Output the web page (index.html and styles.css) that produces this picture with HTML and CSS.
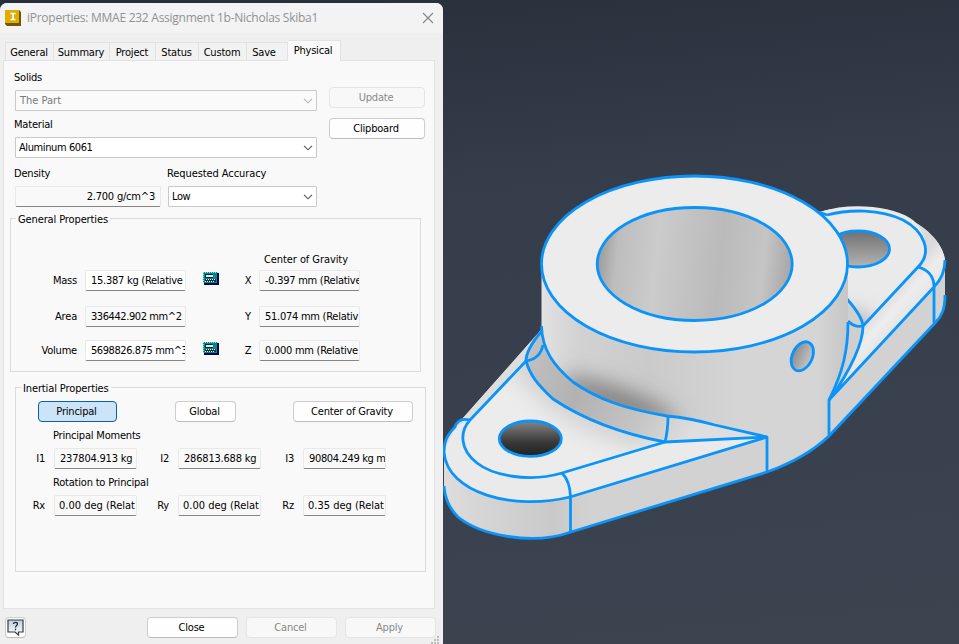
FILE: index.html
```html
<!DOCTYPE html>
<html lang="en">
<head>
<meta charset="utf-8">
<title>iProperties</title>
<link rel="stylesheet" href="styles.css">
</head>
<body>
<main class="workspace">
  <section class="dialog">
    <header class="titlebar">
      <svg class="app-icon" width="16" height="16" viewBox="0 0 16 16"><path d="M0 0h14l2 2v14H2L0 14z" fill="#735600"/><path d="M0 0h14v13H0z" fill="#dfae00"/><path d="M5.500 3.500h5M5.500 9.500h5M8 3.500v6" stroke="#fff" stroke-width="1.700"/></svg>
      <h1 class="title">iProperties: MMAE 232 Assignment 1b-Nicholas Skiba1</h1>
      <svg class="close-icon" width="12" height="12" viewBox="0 0 12 12"><path d="M1 1l10 10M11 1L1 11" stroke="#858585" stroke-width="1.100"/></svg>
    </header>
    <nav class="tabs">
      <span class="tab general">General</span><span class="tab summary">Summary</span><span class="tab project">Project</span><span class="tab status">Status</span><span class="tab custom">Custom</span><span class="tab save">Save</span><span class="tab active">Physical</span>
    </nav>
    <div class="panel">
      <div class="top">
        <div class="inputs">
          <label class="label">Solids</label>
          <div class="select disabled"><span>The Part</span><svg class="chev" width="10" height="6" viewBox="0 0 10 6"><path d="M1 .8l4 4 4-4"/></svg></div>
          <label class="label material">Material</label>
          <div class="select"><span>Aluminum 6061</span><svg class="chev" width="10" height="6" viewBox="0 0 10 6"><path d="M1 .8l4 4 4-4"/></svg></div>
          <div class="pair">
            <div class="density"><label class="label">Density</label><div class="field right">2.700 g/cm^3</div></div>
            <div class="accuracy"><label class="label wide">Requested Accuracy</label><div class="select"><span>Low</span><svg class="chev" width="10" height="6" viewBox="0 0 10 6"><path d="M1 .8l4 4 4-4"/></svg></div></div>
          </div>
        </div>
        <div class="actions"><button class="btn" disabled>Update</button><button class="btn">Clipboard</button></div>
      </div>
      <fieldset class="group general-group">
        <legend>General Properties</legend>
        <div class="caption gravity">Center of Gravity</div>
        <div class="props">
          <span class="name">Mass</span><div class="field white">15.387 kg (Relative</div>
          <svg class="calc" width="16" height="13" viewBox="0 0 16 13" shape-rendering="crispEdges"><path d="M1 1h15v12H1z" fill="#000050"/><path d="M0 0h14v11H0z" fill="#008c8c"/><path d="M.5 11V.5H15" fill="none" stroke="#7ff0ec" stroke-dasharray="1 1"/><path d="M2 2h8v4H2z" fill="#002830"/><path d="M3 3h7v2H3z" fill="#e8e8e8"/><path d="M2 7h11v3H2z" fill="#003c40"/><path d="M3 7.500h10M2 9.500h10" stroke="#fff" stroke-dasharray="1 1"/></svg>
          <span class="axis">X</span><div class="field">-0.397 mm (Relative</div>
          <span class="name">Area</span><div class="field tight">336442.902 mm^2</div><i></i>
          <span class="axis">Y</span><div class="field">51.074 mm (Relativ</div>
          <span class="name">Volume</span><div class="field white tight">5698826.875 mm^3</div>
          <svg class="calc" width="16" height="13" viewBox="0 0 16 13" shape-rendering="crispEdges"><path d="M1 1h15v12H1z" fill="#000050"/><path d="M0 0h14v11H0z" fill="#008c8c"/><path d="M.5 11V.5H15" fill="none" stroke="#7ff0ec" stroke-dasharray="1 1"/><path d="M2 2h8v4H2z" fill="#002830"/><path d="M3 3h7v2H3z" fill="#e8e8e8"/><path d="M2 7h11v3H2z" fill="#003c40"/><path d="M3 7.500h10M2 9.500h10" stroke="#fff" stroke-dasharray="1 1"/></svg>
          <span class="axis">Z</span><div class="field">0.000 mm (Relative</div>
        </div>
      </fieldset>
      <fieldset class="group inertial-group">
        <legend>Inertial Properties</legend>
        <div class="modes"><button class="btn selected">Principal</button><button class="btn global">Global</button><button class="btn center">Center of Gravity</button></div>
        <div class="caption">Principal Moments</div>
        <div class="triple"><span class="name">I1</span><div class="field">237804.913 kg</div><span class="name">I2</span><div class="field">286813.688 kg</div><span class="name">I3</span><div class="field tight">90804.249 kg m</div></div>
        <div class="caption">Rotation to Principal</div>
        <div class="triple"><span class="name">Rx</span><div class="field loose">0.00 deg (Relat</div><span class="name">Ry</span><div class="field loose">0.00 deg (Relat</div><span class="name">Rz</span><div class="field loose">0.35 deg (Relat</div></div>
      </fieldset>
    </div>
    <footer class="footer">
      <button class="btn help"><svg width="17" height="17" viewBox="0 0 17 17"><defs><linearGradient id="hg" x2="0" y2="1"><stop stop-color="#c5ccd6"/><stop offset="1" stop-color="#fff"/></linearGradient></defs><path d="M1 1h15v12h-4.500v3L8 13H1z" fill="url(#hg)" stroke="#333b47" stroke-width="1.200"/><path d="M6.500 5C6.500 2.800 10.500 2.800 10.500 5c0 1.600-2 1.500-2 3.500M8.500 9.800v1.500" fill="none" stroke="#222a35" stroke-width="1.300"/></svg></button>
      <button class="btn">Close</button><button class="btn" disabled>Cancel</button><button class="btn" disabled>Apply</button>
    </footer>
    <svg class="grip" width="10" height="8" viewBox="0 0 10 8"><path d="M6 0h2v2H6zM3 3h2v2H3zM6 3h2v2H6zM0 6h2v2H0zM3 6h2v2H3zM6 6h2v2H6z" fill="#bcbcbc"/></svg>
  </section>
  <svg class="scene" width="516" height="644" viewBox="443 0 516 644">
    <defs>
      <linearGradient id="body" gradientUnits="userSpaceOnUse" x1="541" y1="0" x2="848" y2="0"><stop stop-color="#e2e2e2"/><stop offset=".12" stop-color="#d2d2d2"/><stop offset=".35" stop-color="#cacaca"/><stop offset=".65" stop-color="#d5d5d5"/><stop offset=".9" stop-color="#d5d5d5"/><stop offset="1" stop-color="#c6c6c6"/></linearGradient>
      <linearGradient id="bore" gradientUnits="userSpaceOnUse" x1="597" y1="255" x2="792" y2="275"><stop stop-color="#999"/><stop offset=".1" stop-color="#bdbdbd"/><stop offset=".3" stop-color="#cbcbcb"/><stop offset=".63" stop-color="#bababa"/><stop offset=".85" stop-color="#c5c5c5"/><stop offset="1" stop-color="#a5a5a5"/></linearGradient>
      <linearGradient id="hole" x2="0" y2="1"><stop stop-color="#858585"/><stop offset=".6" stop-color="#393939"/><stop offset="1" stop-color="#202020"/></linearGradient>
      <linearGradient id="hole2" x2="0" y2="1"><stop stop-color="#707070"/><stop offset="1" stop-color="#b4b4b4"/></linearGradient>
      <linearGradient id="hole3"><stop stop-color="#8d8d8d"/><stop offset="1" stop-color="#c5c5c5"/></linearGradient>
      <linearGradient id="fillet" gradientUnits="userSpaceOnUse" x1="530" y1="350" x2="690" y2="435"><stop stop-color="#c0c0c0"/><stop offset=".35" stop-color="#b2b2b2"/><stop offset=".7" stop-color="#c4c4c4"/><stop offset="1" stop-color="#dedede"/></linearGradient>
      <linearGradient id="side" gradientUnits="userSpaceOnUse" x1="444" y1="0" x2="590" y2="0"><stop stop-color="#dcdcdc"/><stop offset=".75" stop-color="#c8c9c8"/><stop offset="1" stop-color="#d1d2d1"/></linearGradient>
      <linearGradient id="rside" gradientUnits="userSpaceOnUse" x1="880" y1="300" x2="905" y2="323"><stop stop-color="#dadada"/><stop offset=".5" stop-color="#ededed"/><stop offset="1" stop-color="#e4e4e4"/></linearGradient>
      <filter id="soft" filterUnits="userSpaceOnUse" x="443" y="150" width="516" height="400"><feGaussianBlur stdDeviation="11"/></filter>
      <clipPath id="bodyClip"><path d="M541.500 264V327C543 350 554 364 573 382C594 396 614 406 667 416L767 437V472C795 462 813 451 829 436V400C843 372 848 350 848 320V264z"/></clipPath>
      <clipPath id="armClip"><path d="M526 361L470 420C460 431 459 449 477 463C492 475 528 483 562 473L665 442C623 434 583 418 553 399C536 384 531 375 526 361z"/></clipPath>
      <clipPath id="rightClip"><path d="M820 212C850 202 890 206 910 218C926 228 931 252 918 267L863 326L848 320V250z"/></clipPath>
    </defs>
    <!-- far lug -->
    <path d="M819 212C847 205 876 206 897 214C924 223 945 244 945 262V297C944 309 941 317 935 323L829 436V400L848 330z" fill="#d1d2d1"/>
    <path d="M819 212C847 205 876 206 897 214C924 223 945 244 945 262C944 275 941 280 934 287L829 400L848 320z" fill="url(#rside)"/>
    <g clip-path="url(#rightClip)"><path d="M815 205H930V330H815z" fill="#eaeaea"/><ellipse cx="848" cy="328" rx="24" ry="14" fill="#999" filter="url(#soft)"/></g>
    <ellipse cx="858" cy="249" rx="31.500" ry="18" fill="url(#hole2)"/>
    <path d="M847 299C855 308 861 316 863 326C863 340 849 370 829 400L848 330z" fill="#cfcfcf"/>
    <g class="edge">
      <path d="M819 212L827 215M827 215C850 209 880 209 903 220C924 231 933 252 918 267L863 326C863 342 852 368 830 399M918 267C929 270 934 277 934 287L829 400M934 287V323"/>
      <path d="M934 287C941 280 945 272 945 260M945 295C945 309 942 316 935 323L829 436"/>
      <path d="M847 299C855 308 862 317 863 326Q855 328 848 321"/>
      <ellipse cx="858" cy="249" rx="31.500" ry="18"/>
    </g>
    <!-- near lug -->
    <path d="M541 330L455 427C446 436 444 443 444 452V487C445 500 450 509 458 517C480 535 532 546 571 532L767 472V437L665 380z" fill="url(#side)"/>
    <path d="M541 330L455 427C446 436 444 443 444 452C447 493 513 511 570 497L767 437L665 380z" fill="#dedede"/>
    <path d="M444 452C447 493 513 511 570 497L767 437L665 442L562 473C528 483 492 475 477 463C459 449 460 431 470 420L455 427z" fill="#e9eae9"/>
    <g clip-path="url(#armClip)"><path d="M455 350H670V490H455z" fill="#ececec"/><path d="M515 350C540 400 600 430 655 438" fill="none" stroke="#cfcfcf" stroke-width="22" filter="url(#soft)"/></g>
    <path d="M541 331C530 345 526 353 526 361C530 375 537 384 553 399C583 418 623 434 665 442L767 437L667 416C614 406 594 398 573 382C550 364 542 350 541 327z" fill="url(#fillet)"/>
    <!-- boss -->
    <path d="M541.500 264V327C542 350 554 366 573 382C594 396 614 406 667 416L767 437V472C795 462 813 451 829 436V400C843 372 848 350 848 320V264z" fill="url(#body)"/>
    <g clip-path="url(#bodyClip)"><ellipse cx="618" cy="402" rx="62" ry="13" transform="rotate(20 618 402)" fill="#7c7c7c" filter="url(#soft)"/></g>
    <ellipse cx="694.500" cy="264" rx="153" ry="88" fill="#ececec"/>
    <ellipse cx="694.700" cy="264" rx="97.500" ry="56.500" fill="url(#bore)"/>
    <ellipse cx="802.300" cy="356.300" rx="10" ry="15.300" transform="rotate(25 802.300 356.300)" fill="url(#hole3)"/>
    <ellipse cx="530.300" cy="438.700" rx="31" ry="17.700" fill="url(#hole)"/>
    <g class="edge">
      <ellipse cx="694.500" cy="264" rx="153" ry="88"/>
      <ellipse cx="694.700" cy="264" rx="97.500" ry="56.500"/>
      <ellipse cx="802.300" cy="356.300" rx="10" ry="15.300" transform="rotate(25 802.300 356.300)"/>
      <ellipse cx="530.300" cy="438.700" rx="31" ry="17.700"/>
      <path d="M541.500 326C542 350 554 366 573 382C597 399 625 409 667 416Q690 418 715 425L767 437V472M541 332C530 345 526 353 526 361C530 375 537 384 553 399C583 419 623 434 665 442L767 437"/>
      <path d="M526 361Q540 359 543 345M668 416Q668 430 665 442M526 361L470 420C460 431 459 449 477 463C492 475 528 483 562 473L665 442M470 420Q458 417 455 427C446 436 444 443 444 452C447 493 513 511 570 497L767 437M562 473Q570 481 570.500 497V532"/>
      <path d="M444 486C445 500 450 509 458 517C480 535 532 546 571 532L767 472C795 462 813 451 829 436V400C843 372 848 350 848 322"/>
    </g>
  </svg>
</main>
</body>
</html>
```
FILE: styles.css
```css
* { box-sizing: border-box; }
body { margin: 0; overflow: hidden; }
.workspace {
  display: flex;
  width: 959px;
  height: 644px;
  background: linear-gradient(175deg, #282e39 0%, #353c4a 30%, #3a414e 70%, #3d4450 100%);
}
.scene { display: block; flex: none; }
.edge { fill: none; stroke: #0a94fa; stroke-width: 2.8; stroke-linejoin: round; }
.dialog {
  position: relative;
  flex: none;
  width: 443px;
  height: 641px;
  margin-top: 3px;
  background: #efefef;
  border-radius: 7px 7px 0 0;
  overflow: hidden;
  font: 11px/14px "DejaVu Sans Condensed", "DejaVu Sans", sans-serif;
  letter-spacing: -0.2px;
  color: #000;
  white-space: nowrap;
}
.titlebar { display: flex; align-items: center; height: 30px; padding: 0 9px 0 5px; background: #f3f3f3; }
.title { margin: 0 0 0 6px; flex: 1; font: 400 12px/16px "Open Sans", "Noto Sans", sans-serif; letter-spacing: -0.26px; color: #929292; }
.tabs { display: flex; align-items: flex-end; height: 27px; padding-left: 5px; }
.tab { height: 18px; padding: 3px 1px 0 0; text-align: center; border: solid #e2e2e2; border-width: 1px 1px 0 0; background: #f2f2f2; }
.tab.general { width: 49px; border-left-width: 1px; }
.tab.summary { width: 56px; }
.tab.project { width: 46px; }
.tab.status { width: 43px; }
.tab.custom { width: 48px; }
.tab.save { width: 41px; padding-right: 6px; }
.tab.active { width: 53px; height: 21px; margin-bottom: -1px; padding-right: 2px; background: #f9f9f9; z-index: 1; }
.panel { width: 432px; height: 549px; margin-left: 3px; border: 1px solid #e2e2e2; background: #f9f9f9; padding-top: 10px; }
.top { display: flex; height: 140px; padding-left: 11px; }
.inputs { width: 302px; }
.label { display: block; height: 14px; margin: 0 0 5px -1px; }
.label.material { margin: 7px 0 5px -1px; }
.label.wide { letter-spacing: -0.08px; }
.select { display: flex; align-items: center; justify-content: space-between; height: 21px; padding: 1px 3px 0 3px; border: 1px solid #c9c9c9; border-radius: 1px; background: #fff; letter-spacing: -0.4px; }
.select.disabled { color: #797979; background: #fafafa; padding: 0 3px 0 4px; letter-spacing: 0; }
.chev { fill: none; stroke: #555; stroke-width: 1.1; }
.disabled .chev { stroke: #b5b5b5; }
.pair { display: flex; gap: 7px; margin-top: 9px; }
.pair .label { margin-bottom: 5px; }
.density { width: 146px; }
.accuracy { width: 149px; }
.field { height: 21px; padding: 3px 2px 0 5px; border: 1px solid #e9e9e9; border-bottom-color: #858585; border-radius: 2px; background: #f9f9f9; overflow: hidden; }
.field.white { background: #fff; }
.field.right { text-align: right; padding-right: 5px; }
.actions { display: flex; flex-direction: column; gap: 10px; margin: 16px 0 0 12px; width: 96px; }
.btn { height: 21px; padding: 1px 2px 0 0; font: inherit; letter-spacing: inherit; color: #000; border: 1px solid #cdcdcd; border-bottom-color: #bcbcbc; border-radius: 4px; background: #fefefe; }
.btn:disabled { color: #898989; border-color: #e5e5e5; background: #f8f8f8; }
.btn.selected { width: 79px; border-color: #0860a5; background: #cce4f7; }
.group { margin: 0; padding: 0; border: 1px solid #dcdcdc; min-width: 0; }
.group legend { height: 13px; margin-left: 5px; padding: 0 2px; line-height: 15px; letter-spacing: -0.12px; }
.general-group { width: 411px; height: 160px; margin: 1px 0 0 6px; }
.caption { height: 14px; }
.gravity { margin: 28px 0 3px 253px; letter-spacing: -0.08px; }
.props { display: grid; grid-template-columns: 66px 8px 101px 17px 16px 40px 101px; grid-template-rows: 23px 21px 21px; row-gap: 13px; align-items: start; }
.name { padding-top: 4px; text-align: right; }
.props > .name { grid-column: 1; }
.props > .field { letter-spacing: -0.26px; }
.props > .field.tight { letter-spacing: -0.42px; }
.props > .name + .field { grid-column: 3; }
.props > .calc, .props > i { grid-column: 5; margin-top: 2px; }
.props > .axis { grid-column: 6; padding: 4px 0 0 18px; text-align: center; }
.props > .axis + .field { grid-column: 7; }
.inertial-group { width: 411px; height: 191px; margin: 9px 0 0 11px; }
.inertial-group .caption { margin: 7px 0 5px 37px; }
.modes { display: flex; margin: 7px 0 0 22px; }
.btn.global { width: 61px; margin-left: 58px; }
.btn.center { width: 120px; margin-left: 57px; }
.triple { display: grid; grid-template-columns: 38px 83px 41px 83px 42px 83px; }
.triple .name { padding-right: 9px; }
.triple .tight { letter-spacing: -0.35px; }
.triple .loose { padding-left: 4px; letter-spacing: 0; }
.footer { display: flex; align-items: center; gap: 8px; padding: 8px 0 0 5px; }
.footer .btn { width: 91px; }
.footer .help { width: 21px; margin-right: 113px; padding: 0; }
.help svg { display: block; margin: auto; }
.grip { position: absolute; right: 2px; bottom: 0; }
```
